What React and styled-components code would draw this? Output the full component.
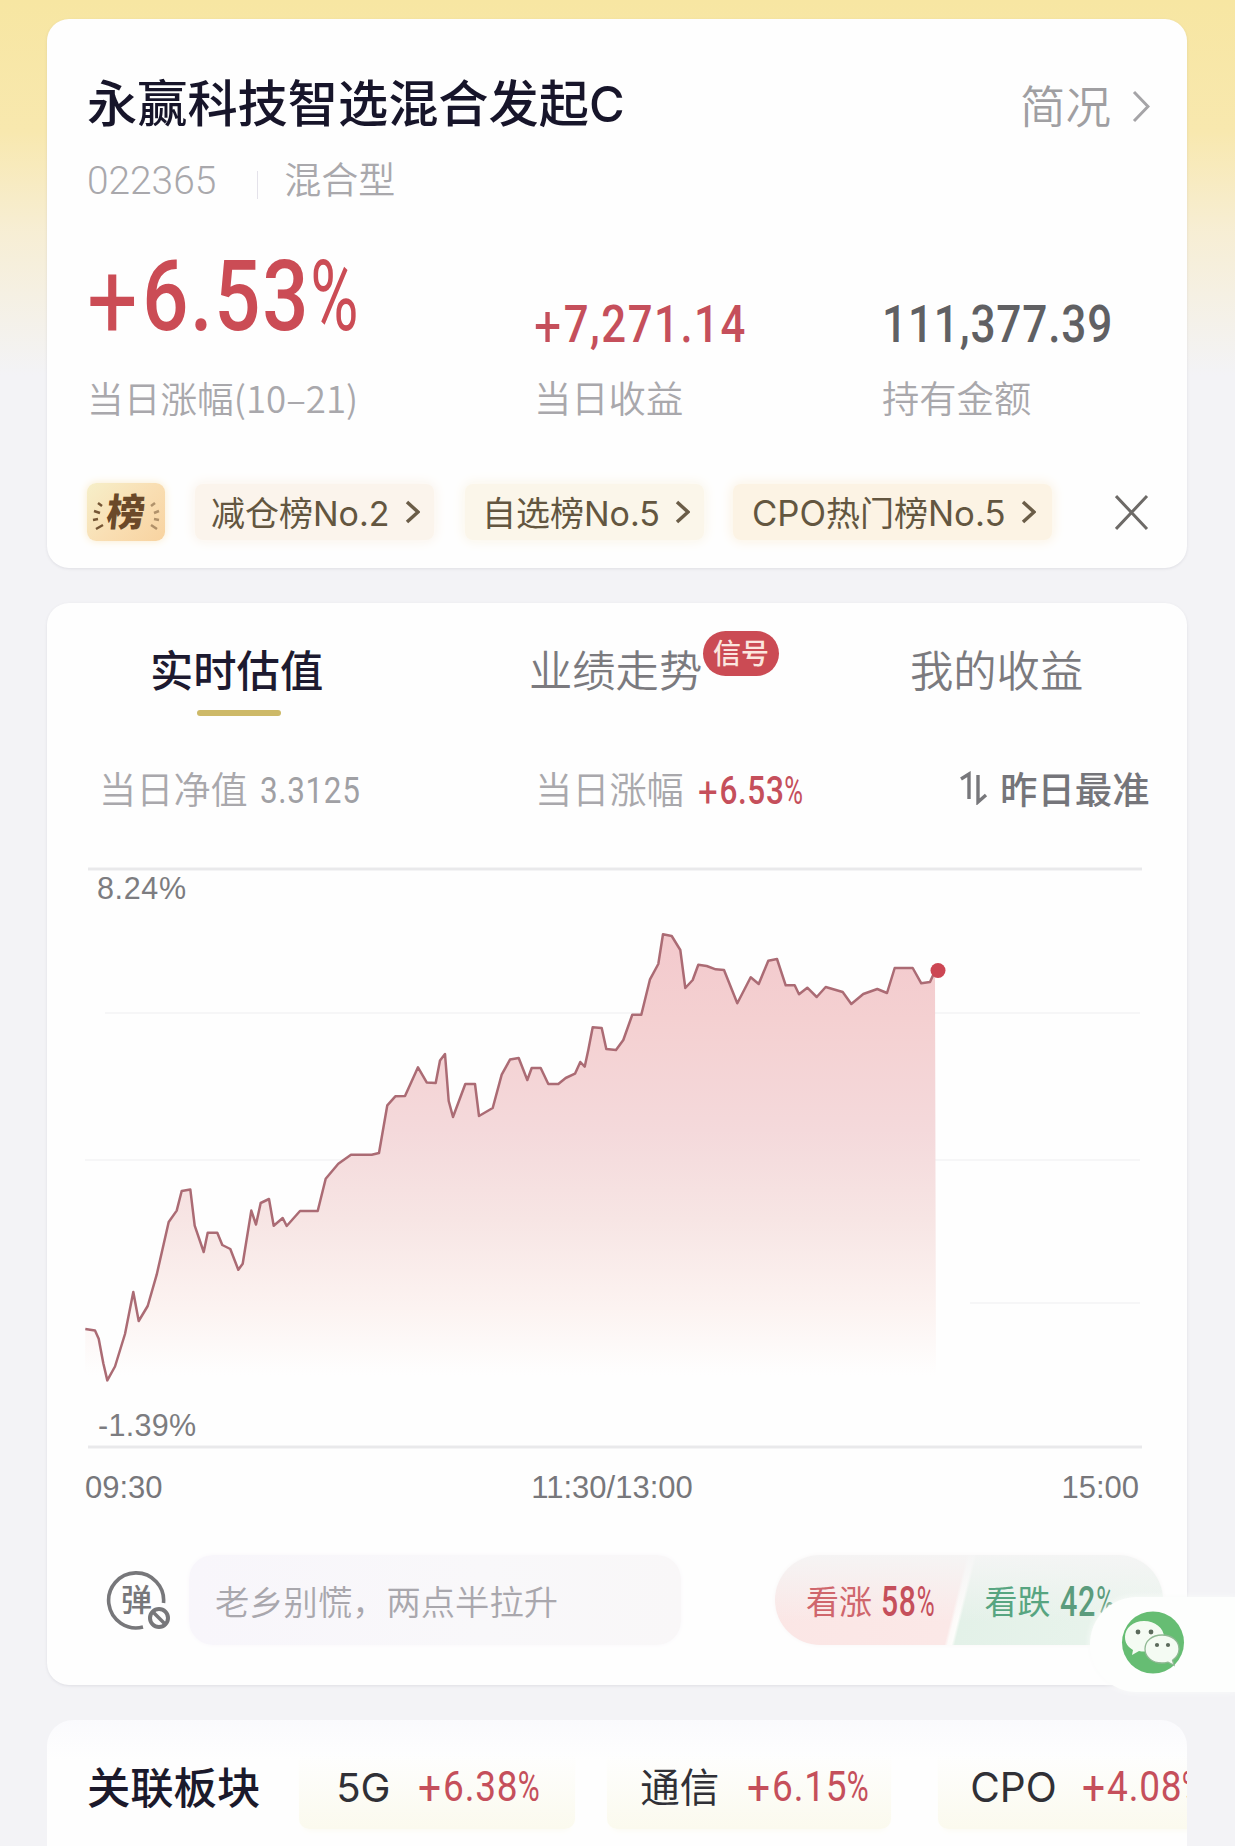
import React from "react";
import styled, { createGlobalStyle } from "styled-components";

const cjk = '"Noto Sans CJK SC", sans-serif';
const din = 'Roboto, "Noto Sans CJK SC", sans-serif';
const helv = '"Liberation Sans", "Noto Sans CJK SC", sans-serif';

const Global = createGlobalStyle`
  *, *::before, *::after { box-sizing: border-box; }
  body { margin: 0; background: #f3f3f5; font-family: ${cjk}; }
`;

const Page = styled.main`
  position: relative;
  width: 1235px;
  height: 1846px;
  overflow: hidden;
  padding: 19px 48px 0 47px;
  display: flex;
  flex-direction: column;
  background:
    linear-gradient(180deg, #f7e6a2 0, #f8e8ae 130px, rgba(248, 236, 200, 0.75) 230px, rgba(243, 243, 245, 0) 375px),
    #f3f3f6;
`;

const Card = styled.section`
  flex: none;
  display: flex;
  flex-direction: column;
  height: ${(p) => p.$h}px;
  margin-bottom: ${(p) => p.$gap || 0}px;
  padding: ${(p) => p.$pad};
  border-radius: 22px;
  background: #fefefe;
  box-shadow: 0 1px 3px rgba(80, 80, 110, 0.12);
`;

const Text = styled.span`
  flex: none;
  display: block;
  font-family: ${cjk};
  font-size: ${(p) => p.$size}px;
  font-weight: ${(p) => p.$weight || 400};
  letter-spacing: ${(p) => p.$ls || 0}px;
  line-height: ${(p) => p.$lh || 46}px;
  padding-top: ${(p) => p.$drop || 0}px;
  color: ${(p) => p.$color};
  white-space: nowrap;
`;

const Latin = styled.span`
  font-family: ${(p) => p.$family || "Inter"}, sans-serif;
  font-size: ${(p) => p.$em || 1}em;
  line-height: 0;
`;

const FigureText = styled(Text)`
  font-family: ${din};
  letter-spacing: ${(p) => p.$track || 0.02}em;
  transform: scaleX(${(p) => p.$scale || 0.84});
  transform-origin: left center;
`;

const Sign = styled.span`
  font-weight: 400;
  font-size: 1.1em;
  line-height: 0;
  vertical-align: -0.07em;
  letter-spacing: 0.05em;
`;

const Percent = styled.span`
  display: inline-block;
  width: 0.6em;
  font-weight: 400;
  transform: scaleX(0.81);
  transform-origin: left center;
`;

const Figure = ({ children, ...rest }) => {
  const plus = children.startsWith("+");
  const pct = children.endsWith("%");
  const digits = children.replace(/[+%]/g, "");
  return (
    <FigureText {...rest}>
      {plus && <Sign>+</Sign>}
      {digits}
      {pct && <Percent>%</Percent>}
    </FigureText>
  );
};

const TitleRow = styled.header`
  display: flex;
  justify-content: space-between;
  align-items: center;
  height: 60px;
`;

const Brief = styled.div`
  display: flex;
  align-items: center;
  gap: 21px;
  padding: 10px 37px 0 0;

  svg { margin-top: 4px; }
`;

const MetaRow = styled.div`
  display: flex;
  align-items: center;
  height: 46px;
  margin-top: 26px;
`;

const Divider = styled.i`
  width: 1px;
  height: 28px;
  margin: 14px 26px 0 41px;
  background: #e4e2ea;
`;

const Stats = styled.div`
  display: grid;
  grid-template-columns: 447px 348px 1fr;
  align-items: end;
  row-gap: 28px;
  margin-top: 46px;
`;

const TagRow = styled.div`
  display: flex;
  align-items: center;
  height: 58px;
  margin-top: 63px;
`;

const RankIcon = styled.div`
  width: 78px;
  height: 58px;
  margin-right: 30px;
  border-radius: 9px;
  background: linear-gradient(135deg, #f6efc9, #f9dfb4 50%, #f8d3a0);
  box-shadow: 0 0 8px #fbeccb;

  svg { display: block; overflow: visible; }
`;

const Tag = styled.div`
  display: flex;
  align-items: center;
  justify-content: space-between;
  width: ${(p) => p.$w}px;
  height: 56px;
  margin-right: ${(p) => p.$mr}px;
  padding: 0 ${(p) => p.$pr}px 0 ${(p) => p.$pl}px;
  border-radius: 8px;
  background: ${(p) => p.$bg};
  box-shadow: 0 0 12px 2px ${(p) => p.$bg};
`;

const Close = styled.svg`
  width: 34px;
  height: 37px;
`;

const Tabs = styled.nav`
  display: grid;
  grid-template-columns: 379px 381px 1fr;
  height: 77px;
  padding-left: 63px;
`;

const Tab = styled.div`
  position: relative;
  justify-self: start;
`;

const Underline = styled.i`
  display: block;
  width: 84px;
  height: 6px;
  margin: 14px 0 0 47px;
  border-radius: 4px;
  background: #cdb968;
`;

const Badge = styled.b`
  position: absolute;
  left: 174px;
  top: -10px;
  width: 76px;
  height: 45px;
  border-radius: 23px;
  background: #cb4b54;
  color: #fbe6df;
  font: 500 28px/42px ${cjk};
  text-align: center;
  white-space: nowrap;
`;

const InfoRow = styled.div`
  display: grid;
  grid-template-columns: 436px 425px 1fr;
  height: 50px;
  margin-top: 44px;
  padding-left: 12px;
`;

const InfoCell = styled.div`
  display: flex;
  align-items: center;
  gap: ${(p) => p.$gap}px;
`;

const Chart = styled.svg`
  flex: none;
  width: 1060px;
  height: 595px;
  margin: 48px 0 0 -2px;
`;

const Times = styled.div`
  display: flex;
  justify-content: space-between;
  width: 1054px;
  height: 44px;
  margin: 10px 0 0 -2px;
`;

const Time = styled(Text)`
  font-family: ${helv};
`;

const ActionRow = styled.div`
  display: flex;
  align-items: center;
  height: 90px;
  margin-top: 46px;
`;

const BarrageIcon = styled.svg`
  flex: none;
  width: 68px;
  height: 64px;
  margin: 0 17px;
`;

const Input = styled.div`
  flex: none;
  width: 492px;
  height: 90px;
  margin-right: 94px;
  padding: 22px 0 0 26px;
  border-radius: 24px;
  background: linear-gradient(90deg, #f8f6fb, #f9f8fa 60%, #f9f7f8);
  box-shadow: 0 0 5px #faf8fb;
`;

const Vote = styled.div`
  flex: none;
  display: flex;
  width: 388px;
  height: 90px;
  padding: 22px 0 0 31px;
  border-radius: 45px;
  background:
    linear-gradient(180deg, rgba(245, 245, 245, 0.95), rgba(245, 245, 245, 0) 75%),
    linear-gradient(104deg, #fbe6e5 0, #fbe8e7 186px, #fdfaf9 189px, #fdfdfb 193px, #e3f1e8 196px, #eaf4ed 100%);
  box-shadow: 0 0 5px #f9f7f7;
`;

const VoteSide = styled.div`
  display: flex;
  gap: 9px;
  width: 187px;
`;

const Sectors = styled.section`
  flex: none;
  display: flex;
  align-items: center;
  height: 150px;
  padding: 3px 0 23px 40px;
  border-radius: 26px 26px 0 0;
  background: linear-gradient(180deg, #fafafd, #fefefe 40px);
  overflow: hidden;
`;

const Sector = styled.div`
  flex: none;
  display: flex;
  align-items: center;
  gap: ${(p) => p.$gap}px;
  width: ${(p) => p.$w}px;
  height: 88px;
  margin-left: ${(p) => p.$ml}px;
  padding-left: ${(p) => p.$pl}px;
  border-radius: 10px;
  background: linear-gradient(180deg, rgba(252, 250, 232, 0) 15%, #fbfaee);
  box-shadow: 0 6px 8px -6px #fbfaee;
`;

const Float = styled.aside`
  position: absolute;
  left: 1090px;
  top: 1597px;
  width: 145px;
  height: 95px;
  padding: 14px 0 0 31px;
  border-radius: 47px 0 0 47px;
  background: #fdfefd;
  box-shadow: 0 0 6px #fbfcfb;
`;

const Chevron = ({ w, h, color, sw }) => (
  <svg width={w} height={h} viewBox={`0 0 ${w} ${h}`} fill="none" stroke={color} strokeWidth={sw}>
    <path d={`M2 2 L${w - 2} ${h / 2} L2 ${h - 2}`} />
  </svg>
);

const series = [
  [85.3, 1329], [95, 1330.6], [98.7, 1338.8], [103.3, 1363.3], [107.3, 1380.4], [115, 1366.5], [125, 1334],
  [133.3, 1292], [138.7, 1321], [147.7, 1306], [156.7, 1274.7], [168.7, 1222], [176.7, 1210.6], [181.7, 1191],
  [190.3, 1189.4], [194.7, 1225.7], [203.7, 1252], [207.7, 1232.7], [217.3, 1232.7], [222.3, 1245], [230.3, 1249],
  [238.3, 1269.8], [242.7, 1263.7], [251.3, 1210.6], [256, 1224.5], [260.7, 1203], [269, 1199], [273.7, 1225.7],
  [282.7, 1218], [286.7, 1226], [300, 1211], [317.7, 1211], [325.7, 1178.8], [338.3, 1163.7], [351, 1154.7],
  [371.7, 1154.7], [379, 1153], [387.3, 1105.3], [395.3, 1096.3], [405, 1096], [418, 1067.3], [426.7, 1082.4],
  [435.7, 1082.9], [440, 1060.4], [445, 1054], [448.7, 1101], [453, 1117], [465.3, 1084], [475, 1084], [479, 1116],
  [492.7, 1108], [501.7, 1074.7], [510, 1059.6], [518.7, 1058], [527.3, 1080], [531.7, 1068], [540.7, 1068],
  [548.3, 1084], [558.3, 1084], [565.7, 1078], [575, 1073.7], [580.3, 1062], [584.7, 1066.7], [588.3, 1050],
  [592.7, 1027.3], [601.7, 1028], [606.3, 1049], [616, 1050], [623.3, 1040], [632.3, 1014.7], [641.3, 1014.7],
  [650, 979.3], [658.3, 964], [663, 934.3], [671.7, 936], [680.3, 950], [685.3, 988], [692.7, 980], [698.3, 964.7],
  [706.7, 966], [715.7, 969.3], [724, 970], [737.3, 1003.3], [750.7, 977.3], [758.7, 984], [768.3, 960.7],
  [777, 959], [785.7, 985.3], [794.7, 985.3], [799, 994.3], [807.3, 987.7], [816.7, 997], [825.7, 987],
  [842.7, 992], [851.3, 1004], [863.3, 994], [877.3, 989], [887, 993], [894.7, 968], [912.7, 968], [921.3, 983.3],
  [930, 982], [935, 971],
];
const line = series.map((p) => p.join(",")).join(" ");

const PriceChart = () => (
  <Chart viewBox="85 860 1060 595">
    <defs>
      <linearGradient id="fill" gradientUnits="userSpaceOnUse" x1="0" y1="930" x2="0" y2="1375">
        <stop offset="0" stopColor="#f3c9cd" />
        <stop offset="0.2" stopColor="#f4d0d1" />
        <stop offset="0.45" stopColor="#f4d9db" />
        <stop offset="0.65" stopColor="#f7e5e4" />
        <stop offset="0.85" stopColor="#fcf3f1" />
        <stop offset="1" stopColor="#fefefe" />
      </linearGradient>
    </defs>
    <g stroke="#f6f6f7" strokeWidth="2">
      <path d="M105 1013H1140M85 1160H1140M970 1303H1140" />
    </g>
    <polygon points={`${line} 936,1375 85,1375`} fill="url(#fill)" />
    <g stroke="#e9e9eb" strokeWidth="3">
      <path d="M88 869H1142M88 1447H1142" />
    </g>
    <polyline points={line} fill="none" stroke="#ab6b74" strokeWidth="2.5" strokeLinejoin="round" />
    <circle cx="938" cy="970.5" r="7.5" fill="#cc4653" />
    <g fill="#7c7c80" fontFamily={helv} fontSize="30.5">
      <text x="97" y="899" textLength="89">8.24%</text>
      <text x="98" y="1435.500" textLength="98">-1.39%</text>
    </g>
  </Chart>
);

const grey = "#a9a8ac";
const red = "#c54f5b";

export default function App() {
  return (
    <>
      <Global />
      <Page>
        <Card $h={549} $gap={35} $pad="50px 0 0 40px">
          <TitleRow>
            <Text $size={50.2} $weight={500} $lh={60} $drop={1} $color="#17152a">
              永赢科技智选混合发起<Latin $em={0.97}>C</Latin>
            </Text>
            <Brief>
              <Text $size={45.5} $weight={350} $color="#a09fa2">简况</Text>
              <Chevron w={18} h={33} color="#a5a4a7" sw={3} />
            </Brief>
          </TitleRow>
          <MetaRow>
            <Text $size={37} $weight={350} $color={grey}>
              <Latin $family="Roboto" $em={1.05}>022365</Latin>
            </Text>
            <Divider />
            <Text $size={37} $weight={350} $color={grey}>混合型</Text>
          </MetaRow>
          <Stats>
            <Figure $size={98} $weight={500} $lh={100} $scale={0.83} $color="#cb4c55">+6.53%</Figure>
            <Figure $size={52} $weight={500} $lh={45} $scale={0.84} $track={0.035} $color={red}>+7,271.14</Figure>
            <Figure $size={52} $weight={500} $lh={45} $scale={0.85} $track={0.018} $color="#606063">111,377.39</Figure>
            <Text $size={36.7} $weight={350} $lh={45} $color={grey}>当日涨幅(10–21)</Text>
            <Text $size={37.3} $weight={350} $lh={45} $color={grey}>当日收益</Text>
            <Text $size={37.3} $weight={350} $lh={45} $color={grey}>持有金额</Text>
          </Stats>
          <TagRow>
            <RankIcon>
              <svg width="78" height="58" viewBox="0 0 78 58">
                <g stroke="#755635" strokeWidth="2.5" fill="none">
                  <path d="M11 20l4 3M7 28l6 2M6 37l5-1M9 46l7-4" />
                  <path d="M68 20l-4 3M72 28l-5 2M72 37l-5-1M70 46l-6-4" opacity="0.55" />
                </g>
                <text x="19" y="43" fontFamily={cjk} fontWeight="900" fontSize="38" fill="#6b4929" transform="skewX(-6) translate(4 0)">榜</text>
              </svg>
            </RankIcon>
            <Tag $w={239} $mr={31} $pl={16} $pr={14} $bg="#fbf4ec">
              <Text $size={34} $color="#635640">减仓榜<Latin>No.2</Latin></Text>
              <Chevron w={15} h={24} color="#6b5d48" sw={3.5} />
            </Tag>
            <Tag $w={239} $mr={29} $pl={17} $pr={14} $bg="#fbf6ea">
              <Text $size={34} $color="#635640">自选榜<Latin>No.5</Latin></Text>
              <Chevron w={15} h={24} color="#6b5d48" sw={3.5} />
            </Tag>
            <Tag $w={319} $mr={63} $pl={19} $pr={16} $bg="#fcf3e4">
              <Text $size={34} $color="#635640"><Latin $em={1.02}>CPO</Latin>热门榜<Latin $em={1.02}>No.5</Latin></Text>
              <Chevron w={15} h={24} color="#6b5d48" sw={3.5} />
            </Tag>
            <Close viewBox="0 0 34 37" fill="none" stroke="#6d6a67" strokeWidth="3">
              <path d="M1 2L32 35M32 2L1 35" />
            </Close>
          </TagRow>
        </Card>

        <Card $h={1082} $gap={35} $pad="38px 0 0 40px">
          <Tabs>
            <Tab>
              <Text $size={43.3} $weight={500} $lh={55} $color="#1d1a30">实时估值</Text>
              <Underline />
            </Tab>
            <Tab>
              <Text $size={43.3} $weight={350} $lh={55} $color="#7b7a7e">业绩走势</Text>
              <Badge>信号</Badge>
            </Tab>
            <Tab>
              <Text $size={43.3} $weight={350} $lh={55} $color="#7b7a7e">我的收益</Text>
            </Tab>
          </Tabs>
          <InfoRow>
            <InfoCell $gap={12}>
              <Text $size={37.2} $weight={350} $color={grey}>当日净值</Text>
              <Figure $size={37} $drop={6} $scale={0.85} $color="#a0a0a4">3.3125</Figure>
            </InfoCell>
            <InfoCell $gap={14}>
              <Text $size={37.2} $weight={350} $color={grey}>当日涨幅</Text>
              <Figure $size={38} $drop={6} $weight={500} $scale={0.83} $color={red}>+6.53%</Figure>
            </InfoCell>
            <InfoCell $gap={12}>
              <svg width="28" height="34" viewBox="0 0 28 34" fill="none" stroke="#77777b" strokeWidth="3.4">
                <path d="M1 8L9 3V28M18 4V31L26 24" />
              </svg>
              <Text $size={37.4} $weight={500} $color="#75757a">昨日最准</Text>
            </InfoCell>
          </InfoRow>
          <PriceChart />
          <Times>
            <Time $size={31} $lh={45} $color="#77777b">09:30</Time>
            <Time $size={31} $lh={45} $color="#77777b">11:30/13:00</Time>
            <Time $size={31} $lh={45} $color="#77777b">15:00</Time>
          </Times>
          <ActionRow>
            <BarrageIcon viewBox="0 0 68 64" fill="none" stroke="#77777a" strokeWidth="3.6">
              <path d="M59.500 35A27.500 27.500 0 1 0 39 59" />
              <circle cx="55" cy="50" r="9" strokeWidth="4" />
              <path d="M49 44L61 56" strokeWidth="3.500" />
              <text x="17" y="43" fontFamily={cjk} fontWeight="500" fontSize="31" fill="#77777a" stroke="none">弹</text>
            </BarrageIcon>
            <Input>
              <Text $size={34.3} $weight={350} $color="#a9a7ad">老乡别慌，两点半拉升</Text>
            </Input>
            <Vote>
              <VoteSide>
                <Text $size={33} $color="#cf666c">看涨</Text>
                <Figure $size={43} $drop={1} $weight={500} $scale={0.7} $color={red}>58%</Figure>
              </VoteSide>
              <VoteSide>
                <Text $size={33} $color="#57a581">看跌</Text>
                <Figure $size={43} $drop={1} $weight={500} $scale={0.71} $color="#5b9c7d">42%</Figure>
              </VoteSide>
            </Vote>
          </ActionRow>
        </Card>

        <Sectors>
          <Text $size={43.3} $weight={500} $lh={55} $color="#1b192b">关联板块</Text>
          <Sector $w={276} $ml={39} $pl={37} $gap={27}>
            <Text $size={39} $color="#303036"><Latin $em={1.03}>5G</Latin></Text>
            <Figure $size={43} $drop={2} $scale={0.86} $color={red}>+6.38%</Figure>
          </Sector>
          <Sector $w={284} $ml={32} $pl={33} $gap={28}>
            <Text $size={39.5} $color="#303036">通信</Text>
            <Figure $size={43} $drop={2} $scale={0.86} $color={red}>+6.15%</Figure>
          </Sector>
          <Sector $w={270} $ml={47} $pl={32} $gap={25}>
            <Text $size={39} $color="#303036"><Latin $em={1.04}>CPO</Latin></Text>
            <Figure $size={43} $drop={2} $scale={0.86} $color={red}>+4.08%</Figure>
          </Sector>
        </Sectors>

        <Float>
          <svg width="64" height="64" viewBox="0 0 64 64">
            <circle cx="32" cy="31.500" r="31" fill="#66bd73" />
            <path d="M23 10C12 10 4 17 4 26c0 6 3 10 8 13l-1 5 7-4c2 .5 4 .7 7 .6C35 40 43 34 43 26 43 17 34 10 23 10Z" fill="#f4fbf3" />
            <path d="M41 24c-10 0-17 6-17 14s7 14 17 14c2 0 4-.3 6-.9l6 3.200-1.500-5C55.500 46.500 58 42.500 58 38c0-8-7-14-17-14Z" fill="#f4fbf3" stroke="#8fb893" strokeWidth="1.300" />
            <g fill="#5b6a5c">
              <circle cx="17" cy="21" r="2.400" />
              <circle cx="30" cy="21" r="2.400" />
              <circle cx="36" cy="34" r="2.100" />
              <circle cx="47" cy="34" r="2.100" />
            </g>
          </svg>
        </Float>
      </Page>
    </>
  );
}
